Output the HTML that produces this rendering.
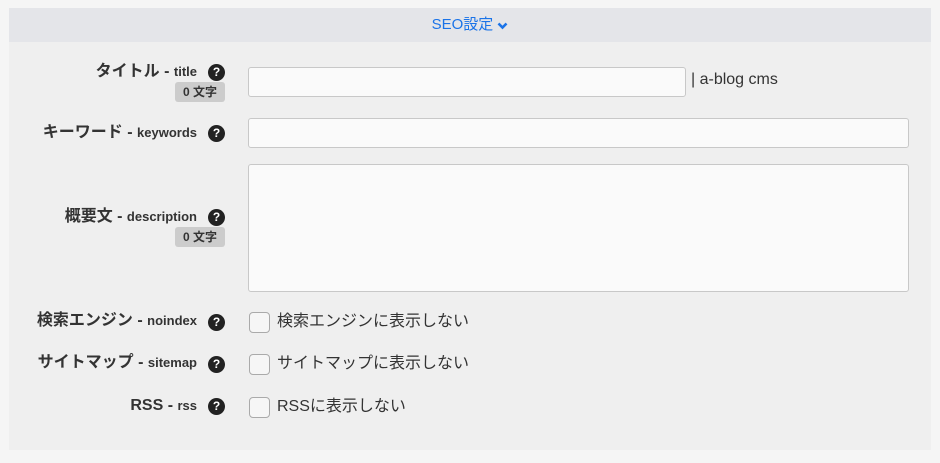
<!DOCTYPE html>
<html><head><meta charset="utf-8"><style>
*{box-sizing:border-box;margin:0;padding:0}
body{width:940px;height:463px;background:#f5f5f5;font-family:"Liberation Sans","Noto Sans CJK JP",sans-serif;color:#333;position:relative;overflow:hidden}
.panel{position:absolute;left:9px;top:8px;width:922px;height:442px;background:#efefef}
.hd{position:absolute;left:9px;top:8px;width:922px;height:34px;background:#e4e5e9;text-align:center;color:#1a73e8;font-size:15px;line-height:34px}
.lab{position:absolute;right:743px;font-weight:bold;font-size:16px;white-space:nowrap;line-height:20px}
.lab small{font-size:13px}
.q{position:absolute;left:208px;width:17px;height:17px;border-radius:50%;background:#222;color:#fff;font-size:12px;font-weight:bold;text-align:center;line-height:17px}
.badge{position:absolute;left:175px;width:50px;height:20px;background:#ccc;border-radius:3px;font-size:12px;font-weight:bold;text-align:center;line-height:20px;color:#333}
.in{position:absolute;left:248px;background:#fafafa;border:1px solid #c8c8c8;border-radius:3px}
.cb{position:absolute;left:249px;width:21px;height:21px;background:#f6f6f6;border:1px solid #aaa;border-radius:4px}
.ct{position:absolute;left:277px;font-size:16px;line-height:20px}
</style></head><body>
<div class="panel"></div>
<div class="hd">SEO設定 <svg width="11" height="9" viewBox="0 0 11 9" style="vertical-align:-1px"><path d="M1.5 2.5 5.5 6.5 9.5 2.5" stroke="#1a73e8" stroke-width="2.6" fill="none"/></svg></div>

<div class="lab" style="top:62px">タイトル - <small>title</small></div>
<div class="q" style="top:64px">?</div>
<div class="badge" style="top:82px">0 文字</div>
<div class="in" style="top:67px;width:438px;height:30px"></div>
<div class="ct" style="left:691px;top:70px">| a-blog cms</div>

<div class="lab" style="top:123px">キーワード - <small>keywords</small></div>
<div class="q" style="top:125px">?</div>
<div class="in" style="top:118px;width:661px;height:30px"></div>

<div class="lab" style="top:207px">概要文 - <small>description</small></div>
<div class="q" style="top:209px">?</div>
<div class="badge" style="top:227px">0 文字</div>
<div class="in" style="top:164px;width:661px;height:128px"></div>

<div class="lab" style="top:311px">検索エンジン - <small>noindex</small></div>
<div class="q" style="top:314px">?</div>
<div class="cb" style="top:312px"></div>
<div class="ct" style="top:312px">検索エンジンに表示しない</div>

<div class="lab" style="top:353px">サイトマップ - <small>sitemap</small></div>
<div class="q" style="top:356px">?</div>
<div class="cb" style="top:354px"></div>
<div class="ct" style="top:354px">サイトマップに表示しない</div>

<div class="lab" style="top:396px">RSS - <small>rss</small></div>
<div class="q" style="top:398px">?</div>
<div class="cb" style="top:397px"></div>
<div class="ct" style="top:397px">RSSに表示しない</div>
</body></html>
